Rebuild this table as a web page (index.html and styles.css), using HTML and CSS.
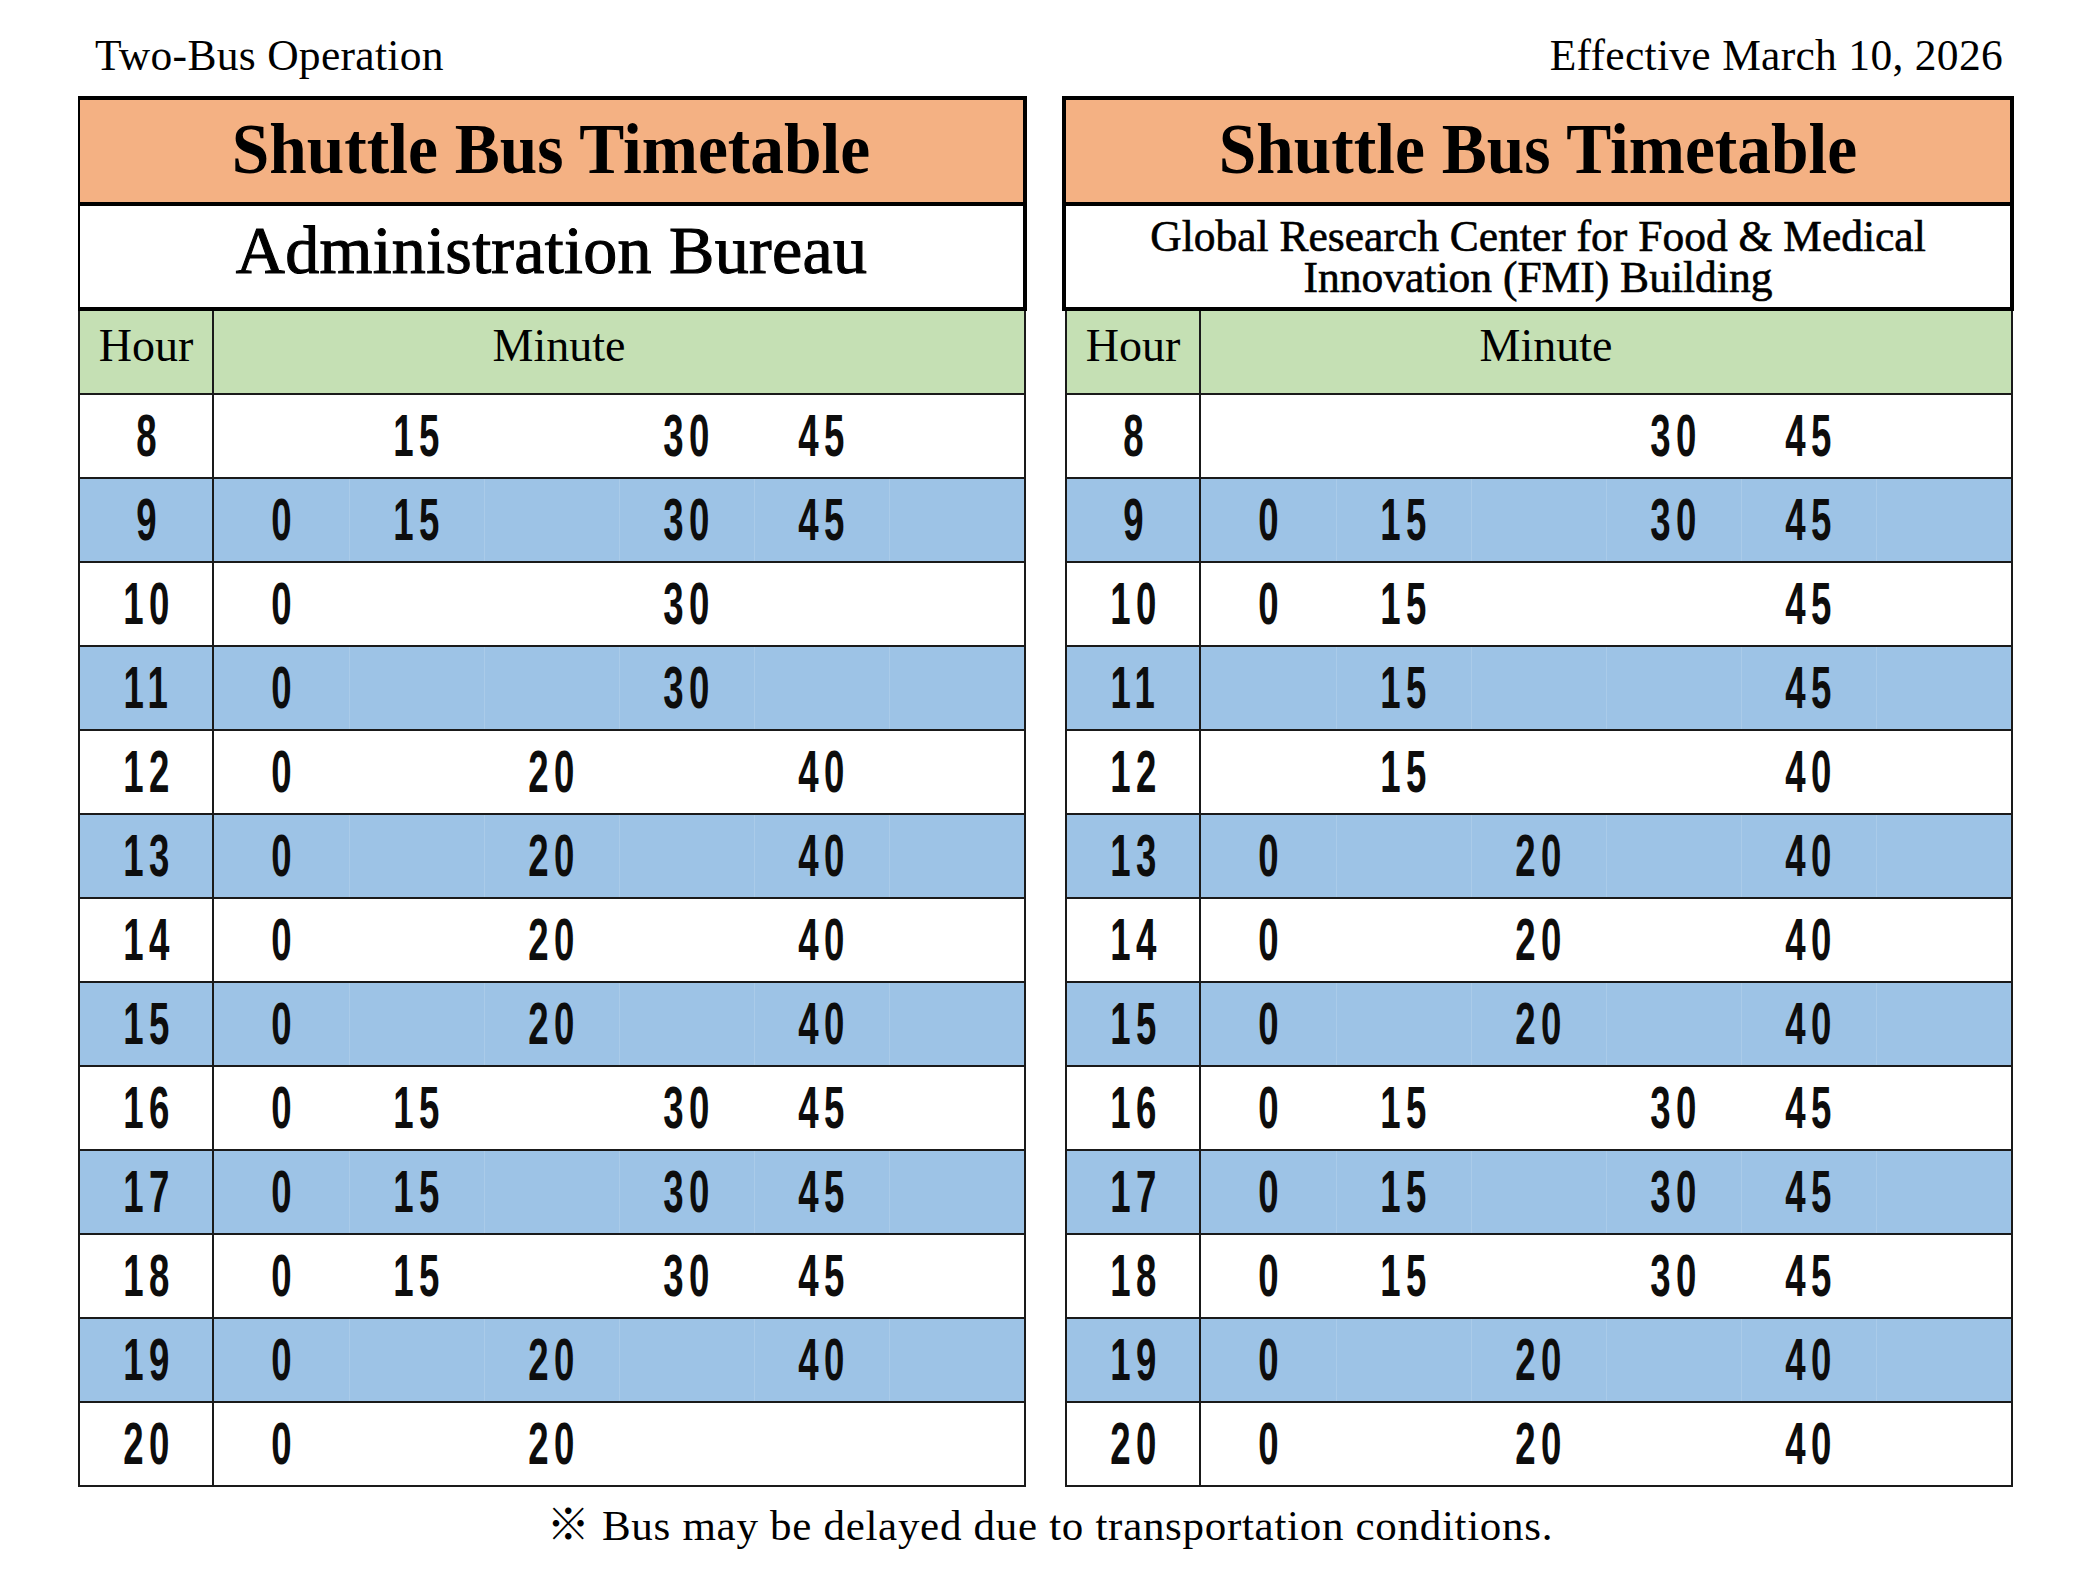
FILE: index.html
```html
<!DOCTYPE html>
<html lang="en">
<head>
<meta charset="utf-8">
<title>Shuttle Bus Timetable</title>
<link rel="stylesheet" href="styles.css">
</head>
<body>
<div class="topbar">
  <span>Two-Bus Operation</span>
  <span>Effective March 10, 2026</span>
</div>

<div class="sheet">
  <section class="panel panel-l">
    <div class="head">
      <div class="title"><span>Shuttle Bus Timetable</span></div>
      <div class="sub sub-one"><span>Administration Bureau</span></div>
    </div>
    <div class="tbl">
      <div class="row hdr"><div class="hr lbl">Hour</div><div class="min lbl">Minute</div></div>
      <div class="row"><div class="hr n"><span>8</span></div><div class="m n"></div><div class="m n"><span>15</span></div><div class="m n"></div><div class="m n"><span>30</span></div><div class="m n"><span>45</span></div><div class="m n"></div></div>
      <div class="row blue"><div class="hr n"><span>9</span></div><div class="m n"><span>0</span></div><div class="m n"><span>15</span></div><div class="m n"></div><div class="m n"><span>30</span></div><div class="m n"><span>45</span></div><div class="m n"></div></div>
      <div class="row"><div class="hr n"><span>10</span></div><div class="m n"><span>0</span></div><div class="m n"></div><div class="m n"></div><div class="m n"><span>30</span></div><div class="m n"></div><div class="m n"></div></div>
      <div class="row blue"><div class="hr n"><span>11</span></div><div class="m n"><span>0</span></div><div class="m n"></div><div class="m n"></div><div class="m n"><span>30</span></div><div class="m n"></div><div class="m n"></div></div>
      <div class="row"><div class="hr n"><span>12</span></div><div class="m n"><span>0</span></div><div class="m n"></div><div class="m n"><span>20</span></div><div class="m n"></div><div class="m n"><span>40</span></div><div class="m n"></div></div>
      <div class="row blue"><div class="hr n"><span>13</span></div><div class="m n"><span>0</span></div><div class="m n"></div><div class="m n"><span>20</span></div><div class="m n"></div><div class="m n"><span>40</span></div><div class="m n"></div></div>
      <div class="row"><div class="hr n"><span>14</span></div><div class="m n"><span>0</span></div><div class="m n"></div><div class="m n"><span>20</span></div><div class="m n"></div><div class="m n"><span>40</span></div><div class="m n"></div></div>
      <div class="row blue"><div class="hr n"><span>15</span></div><div class="m n"><span>0</span></div><div class="m n"></div><div class="m n"><span>20</span></div><div class="m n"></div><div class="m n"><span>40</span></div><div class="m n"></div></div>
      <div class="row"><div class="hr n"><span>16</span></div><div class="m n"><span>0</span></div><div class="m n"><span>15</span></div><div class="m n"></div><div class="m n"><span>30</span></div><div class="m n"><span>45</span></div><div class="m n"></div></div>
      <div class="row blue"><div class="hr n"><span>17</span></div><div class="m n"><span>0</span></div><div class="m n"><span>15</span></div><div class="m n"></div><div class="m n"><span>30</span></div><div class="m n"><span>45</span></div><div class="m n"></div></div>
      <div class="row"><div class="hr n"><span>18</span></div><div class="m n"><span>0</span></div><div class="m n"><span>15</span></div><div class="m n"></div><div class="m n"><span>30</span></div><div class="m n"><span>45</span></div><div class="m n"></div></div>
      <div class="row blue"><div class="hr n"><span>19</span></div><div class="m n"><span>0</span></div><div class="m n"></div><div class="m n"><span>20</span></div><div class="m n"></div><div class="m n"><span>40</span></div><div class="m n"></div></div>
      <div class="row"><div class="hr n"><span>20</span></div><div class="m n"><span>0</span></div><div class="m n"></div><div class="m n"><span>20</span></div><div class="m n"></div><div class="m n"></div><div class="m n"></div></div>
    </div>
  </section>

  <section class="panel panel-r">
    <div class="head">
      <div class="title"><span>Shuttle Bus Timetable</span></div>
      <div class="sub sub-two"><span>Global Research Center for Food &amp; Medical<br>Innovation (FMI) Building</span></div>
    </div>
    <div class="tbl">
      <div class="row hdr"><div class="hr lbl">Hour</div><div class="min lbl">Minute</div></div>
      <div class="row"><div class="hr n"><span>8</span></div><div class="m n"></div><div class="m n"></div><div class="m n"></div><div class="m n"><span>30</span></div><div class="m n"><span>45</span></div><div class="m n"></div></div>
      <div class="row blue"><div class="hr n"><span>9</span></div><div class="m n"><span>0</span></div><div class="m n"><span>15</span></div><div class="m n"></div><div class="m n"><span>30</span></div><div class="m n"><span>45</span></div><div class="m n"></div></div>
      <div class="row"><div class="hr n"><span>10</span></div><div class="m n"><span>0</span></div><div class="m n"><span>15</span></div><div class="m n"></div><div class="m n"></div><div class="m n"><span>45</span></div><div class="m n"></div></div>
      <div class="row blue"><div class="hr n"><span>11</span></div><div class="m n"></div><div class="m n"><span>15</span></div><div class="m n"></div><div class="m n"></div><div class="m n"><span>45</span></div><div class="m n"></div></div>
      <div class="row"><div class="hr n"><span>12</span></div><div class="m n"></div><div class="m n"><span>15</span></div><div class="m n"></div><div class="m n"></div><div class="m n"><span>40</span></div><div class="m n"></div></div>
      <div class="row blue"><div class="hr n"><span>13</span></div><div class="m n"><span>0</span></div><div class="m n"></div><div class="m n"><span>20</span></div><div class="m n"></div><div class="m n"><span>40</span></div><div class="m n"></div></div>
      <div class="row"><div class="hr n"><span>14</span></div><div class="m n"><span>0</span></div><div class="m n"></div><div class="m n"><span>20</span></div><div class="m n"></div><div class="m n"><span>40</span></div><div class="m n"></div></div>
      <div class="row blue"><div class="hr n"><span>15</span></div><div class="m n"><span>0</span></div><div class="m n"></div><div class="m n"><span>20</span></div><div class="m n"></div><div class="m n"><span>40</span></div><div class="m n"></div></div>
      <div class="row"><div class="hr n"><span>16</span></div><div class="m n"><span>0</span></div><div class="m n"><span>15</span></div><div class="m n"></div><div class="m n"><span>30</span></div><div class="m n"><span>45</span></div><div class="m n"></div></div>
      <div class="row blue"><div class="hr n"><span>17</span></div><div class="m n"><span>0</span></div><div class="m n"><span>15</span></div><div class="m n"></div><div class="m n"><span>30</span></div><div class="m n"><span>45</span></div><div class="m n"></div></div>
      <div class="row"><div class="hr n"><span>18</span></div><div class="m n"><span>0</span></div><div class="m n"><span>15</span></div><div class="m n"></div><div class="m n"><span>30</span></div><div class="m n"><span>45</span></div><div class="m n"></div></div>
      <div class="row blue"><div class="hr n"><span>19</span></div><div class="m n"><span>0</span></div><div class="m n"></div><div class="m n"><span>20</span></div><div class="m n"></div><div class="m n"><span>40</span></div><div class="m n"></div></div>
      <div class="row"><div class="hr n"><span>20</span></div><div class="m n"><span>0</span></div><div class="m n"></div><div class="m n"><span>20</span></div><div class="m n"></div><div class="m n"><span>40</span></div><div class="m n"></div></div>
    </div>
  </section>
</div>

<p class="note">※ Bus may be delayed due to transportation conditions.</p>
</body>
</html>
```

FILE: styles.css
```css
html, body {
  margin: 0;
  padding: 0;
  background: #ffffff;
}

body {
  font-family: "Liberation Serif", "Times New Roman", serif;
  color: #000000;
}

.topbar {
  height: 96px;
  box-sizing: border-box;
  padding: 30px 97px 0 95px;
  display: flex;
  justify-content: space-between;
  font-size: 43.5px;
  line-height: normal;
  letter-spacing: 0.3px;
}

.sheet {
  display: flex;
  gap: 35px;
  padding-left: 78px;
}

.panel {
  width: 949px;
}

.panel-r {
  width: 952px;
}

.head {
  border: 4px solid #000000;
  border-left-width: 2px;
}

.panel-r .head {
  border-left-width: 4px;
}

.title {
  height: 106px;
  box-sizing: border-box;
  padding-bottom: 3px;
  background: #f4b183;
  border-bottom: 4px solid #000000;
  display: flex;
  align-items: center;
  justify-content: center;
}

.title span {
  display: inline-block;
  font-weight: bold;
  font-size: 71px;
  line-height: 1;
  transform: scaleX(0.95);
  white-space: nowrap;
}

.sub {
  height: 101px;
  box-sizing: border-box;
  display: flex;
  align-items: center;
  justify-content: center;
  text-align: center;
  background: #ffffff;
}

.sub-one {
  padding-bottom: 13px;
}

.sub-one span {
  font-size: 68px;
  line-height: 1;
  letter-spacing: 0.3px;
  -webkit-text-stroke: 1.1px #000000;
  white-space: nowrap;
}

.sub-two span {
  font-size: 43.5px;
  line-height: 41px;
  -webkit-text-stroke: 0.6px #000000;
}

.tbl {
  width: 948px;
  box-sizing: border-box;
  border-left: 2px solid #1a1a1a;
  border-right: 2px solid #1a1a1a;
}

.panel-r .tbl {
  margin-left: 3px;
}

.row {
  display: grid;
  grid-template-columns: 134px repeat(6, 135px);
  height: 84px;
  box-sizing: border-box;
  border-bottom: 2px solid #1a1a1a;
  background: #ffffff;
}

.row > div {
  display: flex;
  align-items: center;
  justify-content: center;
}

.row .hr {
  border-right: 2px solid #1a1a1a;
}

.hdr {
  background: #c5e0b4;
}

.hdr .min {
  grid-column: span 6;
  padding-right: 120px;
}

.lbl {
  font-size: 46px;
  line-height: 1;
  padding-bottom: 12px;
  box-sizing: border-box;
}

.row.blue {
  background: #9dc3e6;
}

.row.blue .m + .m {
  box-shadow: inset 1px 0 0 rgba(255, 255, 255, 0.14);
}

.n span {
  display: inline-block;
  font-family: "Liberation Sans", Arial, sans-serif;
  font-weight: bold;
  font-size: 59px;
  line-height: 1;
  letter-spacing: 9px;
  padding-left: 9px;
  transform: scaleX(0.62);
  color: #0d0d0d;
}

.note {
  margin: 15px 0 0 0;
  text-align: center;
  font-family: "Liberation Serif", "Noto Sans CJK JP", serif;
  font-size: 43px;
  line-height: 48px;
  letter-spacing: 0.7px;
}
```
